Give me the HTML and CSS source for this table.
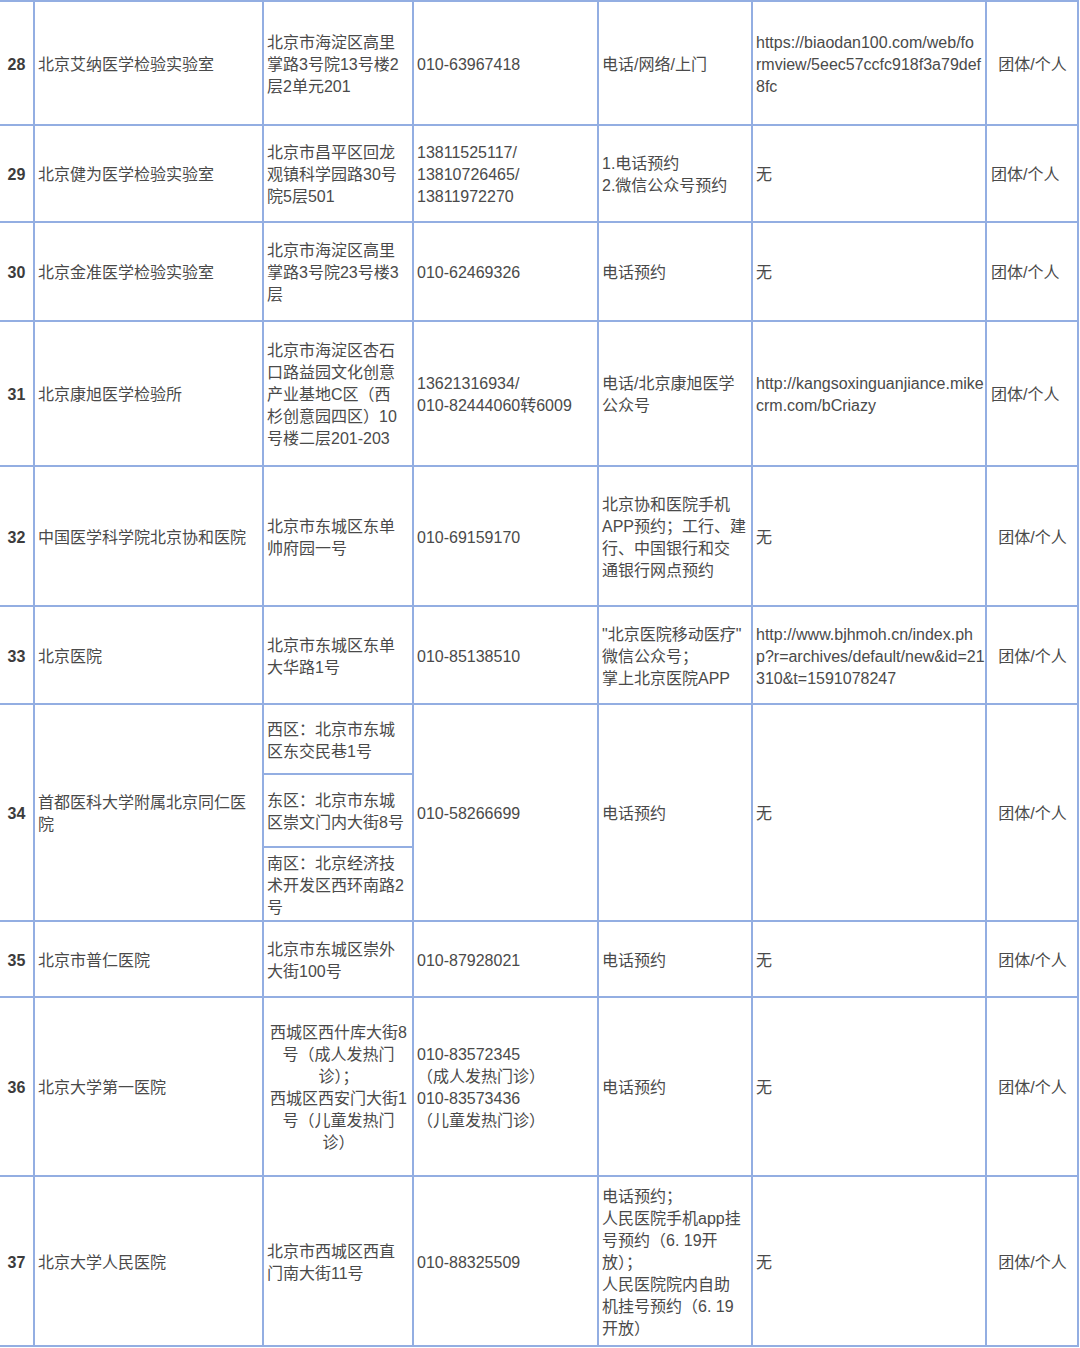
FILE: index.html
```html
<!DOCTYPE html>
<html lang="zh-CN">
<head>
<meta charset="utf-8">
<title>核酸检测机构列表</title>
<link rel="stylesheet" href="styles.css">
</head>
<body>
<table class="sheet">
  <colgroup>
    <col class="c-num">
    <col class="c-name">
    <col class="c-addr">
    <col class="c-phone">
    <col class="c-way">
    <col class="c-url">
    <col class="c-type">
  </colgroup>
  <tbody>
    <tr class="row-28">
      <td class="num">28</td>
      <td>北京艾纳医学检验实验室</td>
      <td>北京市海淀区高里<br>掌路3号院13号楼2<br>层2单元201</td>
      <td>010-63967418</td>
      <td>电话/网络/上门</td>
      <td>https://biaodan100.com/web/fo<br>rmview/5eec57ccfc918f3a79def<br>8fc</td>
      <td class="center">团体/个人</td>
    </tr>
    <tr class="row-29">
      <td class="num">29</td>
      <td>北京健为医学检验实验室</td>
      <td>北京市昌平区回龙<br>观镇科学园路30号<br>院5层501</td>
      <td>13811525117/<br>13810726465/<br>13811972270</td>
      <td>1.电话预约<br>2.微信公众号预约</td>
      <td>无</td>
      <td class="left-type">团体/个人</td>
    </tr>
    <tr class="row-30">
      <td class="num">30</td>
      <td>北京金准医学检验实验室</td>
      <td>北京市海淀区高里<br>掌路3号院23号楼3<br>层</td>
      <td>010-62469326</td>
      <td>电话预约</td>
      <td>无</td>
      <td class="left-type">团体/个人</td>
    </tr>
    <tr class="row-31">
      <td class="num">31</td>
      <td>北京康旭医学检验所</td>
      <td>北京市海淀区杏石<br>口路益园文化创意<br>产业基地C区（西<br>杉创意园四区）10<br>号楼二层201-203</td>
      <td>13621316934/<br>010-82444060转6009</td>
      <td>电话/北京康旭医学<br>公众号</td>
      <td>http://kangsoxinguanjiance.mike<br>crm.com/bCriazy</td>
      <td class="left-type">团体/个人</td>
    </tr>
    <tr class="row-32">
      <td class="num">32</td>
      <td>中国医学科学院北京协和医院</td>
      <td>北京市东城区东单<br>帅府园一号</td>
      <td>010-69159170</td>
      <td>北京协和医院手机<br>APP预约；工行、建<br>行、中国银行和交<br>通银行网点预约</td>
      <td>无</td>
      <td class="center">团体/个人</td>
    </tr>
    <tr class="row-33">
      <td class="num">33</td>
      <td>北京医院</td>
      <td>北京市东城区东单<br>大华路1号</td>
      <td>010-85138510</td>
      <td>"北京医院移动医疗"<br>微信公众号；<br>掌上北京医院APP</td>
      <td>http://www.bjhmoh.cn/index.ph<br>p?r=archives/default/new&amp;id=21<br>310&amp;t=1591078247</td>
      <td class="center">团体/个人</td>
    </tr>
    <tr class="row-34a">
      <td class="num" rowspan="3">34</td>
      <td rowspan="3">首都医科大学附属北京同仁医<br>院</td>
      <td>西区：北京市东城<br>区东交民巷1号</td>
      <td rowspan="3">010-58266699</td>
      <td rowspan="3">电话预约</td>
      <td rowspan="3">无</td>
      <td rowspan="3" class="center">团体/个人</td>
    </tr>
    <tr class="row-34b">
      <td>东区：北京市东城<br>区崇文门内大街8号</td>
    </tr>
    <tr class="row-34c">
      <td>南区：北京经济技<br>术开发区西环南路2<br>号</td>
    </tr>
    <tr class="row-35">
      <td class="num">35</td>
      <td>北京市普仁医院</td>
      <td>北京市东城区崇外<br>大街100号</td>
      <td>010-87928021</td>
      <td>电话预约</td>
      <td>无</td>
      <td class="center">团体/个人</td>
    </tr>
    <tr class="row-36">
      <td class="num">36</td>
      <td>北京大学第一医院</td>
      <td class="center">西城区西什库大街8<br>号（成人发热门<br>诊）；<br>西城区西安门大街1<br>号（儿童发热门<br>诊）</td>
      <td>010-83572345<br>（成人发热门诊）<br>010-83573436<br>（儿童发热门诊）</td>
      <td>电话预约</td>
      <td>无</td>
      <td class="center">团体/个人</td>
    </tr>
    <tr class="row-37">
      <td class="num">37</td>
      <td>北京大学人民医院</td>
      <td>北京市西城区西直<br>门南大街11号</td>
      <td>010-88325509</td>
      <td>电话预约；<br>人民医院手机app挂<br>号预约（6. 19开<br>放）；<br>人民医院院内自助<br>机挂号预约（6. 19<br>开放）</td>
      <td>无</td>
      <td class="center">团体/个人</td>
    </tr>
  </tbody>
</table>
</body>
</html>
```
FILE: styles.css
```css
html, body {
  margin: 0;
  padding: 0;
  background: #ffffff;
}

body {
  width: 1080px;
  height: 1348px;
  overflow: hidden;
  font-family: "Liberation Sans", "Noto Sans CJK SC", sans-serif;
  font-size: 16px;
  color: #4a4a4a;
}

.sheet {
  border-collapse: separate;
  border-spacing: 0;
  table-layout: fixed;
  width: 1079px;
  border-top: 2px solid #93aee2;
}

.sheet td {
  box-sizing: border-box;
  border-right: 2px solid #93aee2;
  border-bottom: 2px solid #93aee2;
  padding: 3px 2px 0 3px;
  vertical-align: middle;
  line-height: 22px;
  white-space: nowrap;
  overflow: hidden;
}

.c-num { width: 35px; }
.c-name { width: 229px; }
.c-addr { width: 150px; }
.c-phone { width: 185px; }
.c-way { width: 154px; }
.c-url { width: 234px; }
.c-type { width: 92px; }

.sheet td.num {
  text-align: center;
  font-weight: bold;
  color: #3c3c3c;
  padding: 3px 0 0 0;
}

.sheet td.center {
  text-align: center;
}

.sheet td.left-type {
  padding-left: 4px;
}

.row-28 { height: 124px; }
.row-29 { height: 97px; }
.row-30 { height: 99px; }
.row-31 { height: 145px; }
.row-32 { height: 140px; }
.row-33 { height: 98px; }
.row-34a { height: 70px; }
.row-34b { height: 73px; }
.row-34c { height: 74px; }
.row-35 { height: 76px; }
.row-36 { height: 179px; }
.row-37 { height: 170px; }
```
